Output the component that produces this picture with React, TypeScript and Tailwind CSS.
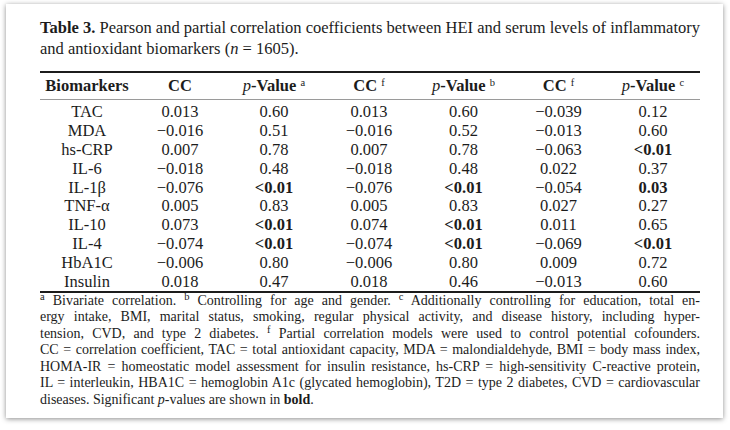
import type { ReactNode } from 'react';

type Cell = { v: string; b?: boolean };
type Row = { name: ReactNode; cells: Cell[] };

const rows: Row[] = [
  { name: 'TAC', cells: [{ v: '0.013' }, { v: '0.60' }, { v: '0.013' }, { v: '0.60' }, { v: '\u22120.039' }, { v: '0.12' }] },
  { name: 'MDA', cells: [{ v: '\u22120.016' }, { v: '0.51' }, { v: '\u22120.016' }, { v: '0.52' }, { v: '\u22120.013' }, { v: '0.60' }] },
  { name: 'hs-CRP', cells: [{ v: '0.007' }, { v: '0.78' }, { v: '0.007' }, { v: '0.78' }, { v: '\u22120.063' }, { v: '<0.01', b: true }] },
  { name: 'IL-6', cells: [{ v: '\u22120.018' }, { v: '0.48' }, { v: '\u22120.018' }, { v: '0.48' }, { v: '0.022' }, { v: '0.37' }] },
  { name: 'IL-1\u03b2', cells: [{ v: '\u22120.076' }, { v: '<0.01', b: true }, { v: '\u22120.076' }, { v: '<0.01', b: true }, { v: '\u22120.054' }, { v: '0.03', b: true }] },
  { name: 'TNF-\u03b1', cells: [{ v: '0.005' }, { v: '0.83' }, { v: '0.005' }, { v: '0.83' }, { v: '0.027' }, { v: '0.27' }] },
  { name: 'IL-10', cells: [{ v: '0.073' }, { v: '<0.01', b: true }, { v: '0.074' }, { v: '<0.01', b: true }, { v: '0.011' }, { v: '0.65' }] },
  { name: 'IL-4', cells: [{ v: '\u22120.074' }, { v: '<0.01', b: true }, { v: '\u22120.074' }, { v: '<0.01', b: true }, { v: '\u22120.069' }, { v: '<0.01', b: true }] },
  { name: 'HbA1C', cells: [{ v: '\u22120.006' }, { v: '0.80' }, { v: '\u22120.006' }, { v: '0.80' }, { v: '0.009' }, { v: '0.72' }] },
  { name: 'Insulin', cells: [{ v: '0.018' }, { v: '0.47' }, { v: '0.018' }, { v: '0.46' }, { v: '\u22120.013' }, { v: '0.60' }] },
];

const cols = 'grid grid-cols-[94px_92px_96px_94px_95px_95px_94px]';

const Sup = ({ children }: { children: ReactNode }) => (
  <sup className="text-[10.5px] font-normal -top-[0.45em]">{children}</sup>
);

const PVal = ({ s }: { s: string }) => (
  <span>
    <i className="font-normal">p</i>-Value <Sup>{s}</Sup>
  </span>
);

// one hard-broken line of justified text
const JLine = ({ children }: { children: ReactNode }) => (
  <div className="text-justify [text-align-last:justify]">{children}</div>
);

export default function App() {
  return (
    <div className="w-[730px] h-[430px] bg-white pt-[4px] pl-[6px] [font-family:'Liberation_Serif',serif] text-[#1c1c1c]">
      <div className="w-[717px] h-[414px] bg-white shadow-[0_1px_5px_rgba(0,0,0,0.45)] pl-[34px] pr-[23px] pt-[13px]">
        <div className="text-[16.5px] leading-[21px]">
          <JLine>
            <b>Table 3.</b> Pearson and partial correlation coefficients between HEI and serum levels of inflammatory
          </JLine>
          <div>
            and antioxidant biomarkers (<i>n</i> = 1605).
          </div>
        </div>

        <div className="mt-[12px] border-t-2 border-b-2 border-[#1c1c1c] text-[16.5px]">
          <div className={`${cols} h-[27px] items-center text-center font-bold border-b border-[#9a9a9a]`}>
            <div>Biomarkers</div>
            <div>CC</div>
            <div><PVal s="a" /></div>
            <div>CC <Sup>f</Sup></div>
            <div><PVal s="b" /></div>
            <div>CC <Sup>f</Sup></div>
            <div><PVal s="c" /></div>
          </div>
          <div className="pt-[3px]">
            {rows.map((r, i) => (
              <div key={i} className={`${cols} h-[18.8px] items-center text-center leading-[18px]`}>
                <div>{r.name}</div>
                {r.cells.map((c, j) => (
                  <div key={j} className={c.b ? 'font-bold' : ''}>
                    {c.v}
                  </div>
                ))}
              </div>
            ))}
          </div>
        </div>

        <div className="text-[14px] leading-[16.5px]">
          <JLine>
            <Sup>a</Sup> Bivariate correlation. <Sup>b</Sup> Controlling for age and gender. <Sup>c</Sup> Additionally controlling for education, total en-
          </JLine>
          <JLine>
            ergy intake, BMI, marital status, smoking, regular physical activity, and disease history, including hyper-
          </JLine>
          <JLine>
            tension, CVD, and type 2 diabetes. <Sup>f</Sup> Partial correlation models were used to control potential cofounders.
          </JLine>
          <JLine>
            CC = correlation coefficient, TAC = total antioxidant capacity, MDA = malondialdehyde, BMI = body mass index,
          </JLine>
          <JLine>
            HOMA-IR = homeostatic model assessment for insulin resistance, hs-CRP = high-sensitivity C-reactive protein,
          </JLine>
          <JLine>
            IL = interleukin, HBA1C = hemoglobin A1c (glycated hemoglobin), T2D = type 2 diabetes, CVD = cardiovascular
          </JLine>
          <div>
            diseases. Significant <i>p</i>-values are shown in <b>bold</b>.
          </div>
        </div>
      </div>
    </div>
  );
}
